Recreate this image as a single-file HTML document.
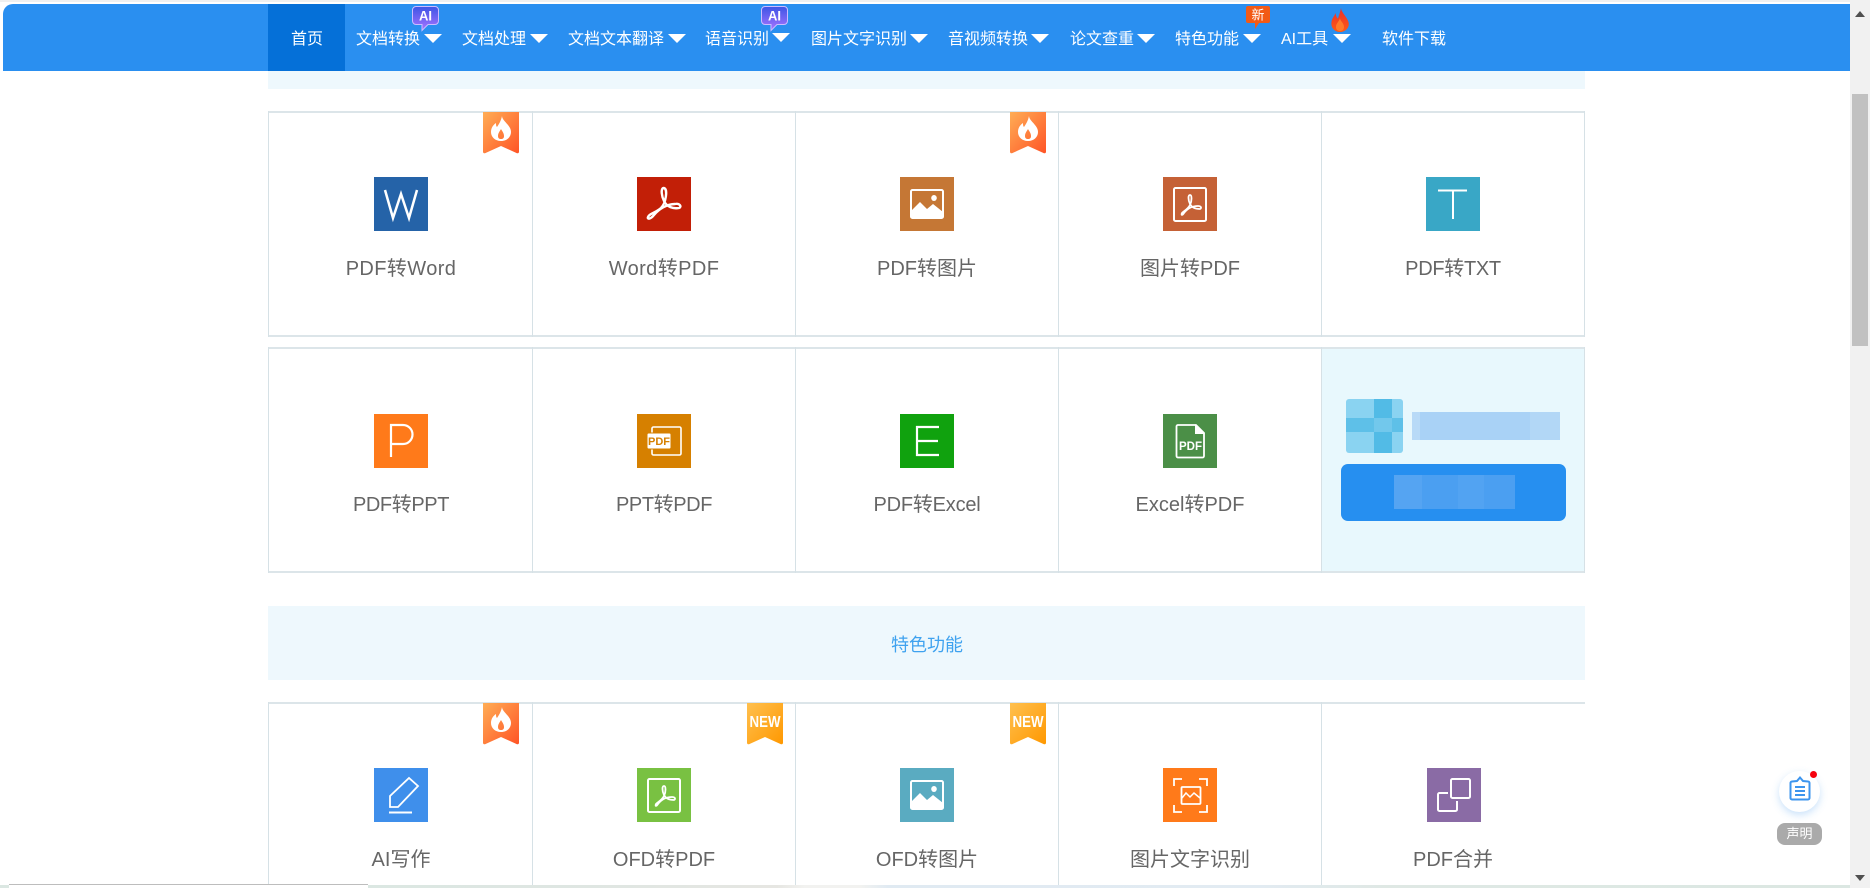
<!DOCTYPE html>
<html lang="zh-CN">
<head>
<meta charset="utf-8">
<title>PDF转换</title>
<style>
html,body{margin:0;padding:0;width:1870px;height:888px;overflow:hidden;background:#fff}
body{position:relative;font-family:"Liberation Sans","Noto Sans CJK SC",sans-serif}
div,span,svg{position:absolute;display:block}
.hd{left:3px;top:4px;width:1847px;height:67px;background:#2a8ff0;border-top-left-radius:10px}
.n{top:28px;height:24px;line-height:24px;font-size:16px;color:#fff;white-space:nowrap}
.a{width:0;height:0;border-left:9px solid transparent;border-right:9px solid transparent;border-top:9px solid #fff;top:34px}
.band{left:268px;width:1317px;background:#eef8fd}
.h{background:#dce5e9}
.v{background:#d6e1e6;width:1px}
.ic{width:54px;height:54px}
.t{width:260px;height:30px;line-height:30px;font-size:20px;color:#666;text-align:center;white-space:nowrap}
.r{width:36px;height:42px}
</style>
</head>
<body>
<svg width="0" height="0" style="left:0;top:0">
<defs>
<linearGradient id="gf" x1="0" y1="0" x2="1" y2="1"><stop offset="0" stop-color="#ffad55"/><stop offset="1" stop-color="#ff5426"/></linearGradient>
<linearGradient id="gn" x1="0" y1="0" x2="1" y2="1"><stop offset="0" stop-color="#ffc04f"/><stop offset="1" stop-color="#ff9800"/></linearGradient>
<linearGradient id="gai" x1="0" y1="0" x2="0" y2="1"><stop offset="0" stop-color="#3d55e6"/><stop offset="1" stop-color="#a874ff"/></linearGradient>
<linearGradient id="gfl" x1="0" y1="0" x2="0" y2="1"><stop offset="0" stop-color="#e8302e"/><stop offset="1" stop-color="#ff5a14"/></linearGradient>
<symbol id="flame" viewBox="0 0 36 42"><path fill="#fff" fill-rule="evenodd" d="M19 4c0 5 9 9 9 16 0 5-4 9-10 9S8 25 8 20c0-4 2-7 5-9 0 2 0 3 1 4 2-3 4-6 5-11zM18 17c-1 2-3 4-3 7 0 2 1 3 3 3s3-1 3-3c0-3-2-5-3-7z"/></symbol>
</defs>
</svg>

<!-- top strip -->
<div style="left:0;top:0;width:1850px;height:2px;background:#f0f0f0"></div>

<!-- header -->
<div class="hd"></div>
<div style="left:268px;top:4px;width:77px;height:67px;background:#0570d8"></div>
<div class="n" style="left:291px">首页</div>
<div class="n" style="left:356px">文档转换</div><div class="a" style="left:424px"></div>
<div class="n" style="left:462px">文档处理</div><div class="a" style="left:530px"></div>
<div class="n" style="left:568px">文档文本翻译</div><div class="a" style="left:668px"></div>
<div class="n" style="left:705px">语音识别</div><div class="a" style="left:772px;top:33px"></div>
<div class="n" style="left:811px">图片文字识别</div><div class="a" style="left:910px"></div>
<div class="n" style="left:948px">音视频转换</div><div class="a" style="left:1031px"></div>
<div class="n" style="left:1070px">论文查重</div><div class="a" style="left:1137px"></div>
<div class="n" style="left:1175px">特色功能</div><div class="a" style="left:1243px"></div>
<div class="n" style="left:1281px">AI工具</div><div class="a" style="left:1333px"></div>
<div class="n" style="left:1382px">软件下载</div>

<!-- AI badges -->
<svg style="left:411px;top:5px" width="29" height="27" viewBox="0 0 29 27"><path d="M5 1.500H24a3.500 3.500 0 0 1 3.500 3.500V16a3.500 3.500 0 0 1-3.500 3.500H17L11 25.500V19.500H5A3.500 3.500 0 0 1 1.500 16V5A3.500 3.500 0 0 1 5 1.500z" fill="url(#gai)" stroke="#cdbbff" stroke-width="1"/><text x="14.500" y="15.500" font-family="Liberation Sans" font-size="13.500" font-weight="bold" fill="#fff" text-anchor="middle" textLength="13" lengthAdjust="spacingAndGlyphs">AI</text></svg>
<svg style="left:760px;top:5px" width="29" height="27" viewBox="0 0 29 27"><path d="M5 1.500H24a3.500 3.500 0 0 1 3.500 3.500V16a3.500 3.500 0 0 1-3.500 3.500H17L11 25.500V19.500H5A3.500 3.500 0 0 1 1.500 16V5A3.500 3.500 0 0 1 5 1.500z" fill="url(#gai)" stroke="#cdbbff" stroke-width="1"/><text x="14.500" y="15.500" font-family="Liberation Sans" font-size="13.500" font-weight="bold" fill="#fff" text-anchor="middle" textLength="13" lengthAdjust="spacingAndGlyphs">AI</text></svg>
<!-- 新 badge -->
<svg style="left:1246px;top:6px" width="24" height="23" viewBox="0 0 24 23"><path d="M2 0H22a2 2 0 0 1 2 2V15a2 2 0 0 1-2 2H13L9 23V17H2a2 2 0 0 1-2-2V2a2 2 0 0 1 2-2z" fill="#f25a16"/><text x="12" y="13.500" font-family="Noto Sans CJK SC" font-size="13" fill="#fff" text-anchor="middle">新</text></svg>
<!-- fire -->
<svg style="left:1330px;top:8px" width="20" height="24" viewBox="0 0 20 24"><path d="M11 0C11 4 17 9 18.500 14C20 20 15 24 10 24C5 24 0.500 20 1.500 14C2 10 4 9 5.500 5C6 8 7 10 8 10.500C9 7 10.500 3 11 0z" fill="url(#gfl)"/><path d="M10 10C10 13 14 15 14 19C14 22 12 23 10 23C8 23 6 22 6 19C6 15 9 14 10 10z" fill="#ff7a2a"/></svg>

<!-- first band remainder -->
<div class="band" style="top:71px;height:18px"></div>

<!-- Row 1 lines -->
<div class="h" style="left:268px;top:111px;width:1317px;height:2px"></div>
<div class="h" style="left:268px;top:335px;width:1317px;height:2px"></div>
<div class="v" style="left:268px;top:111px;height:226px"></div>
<div class="v" style="left:532px;top:111px;height:226px"></div>
<div class="v" style="left:795px;top:111px;height:226px"></div>
<div class="v" style="left:1058px;top:111px;height:226px"></div>
<div class="v" style="left:1321px;top:111px;height:226px"></div>
<div class="v" style="left:1584px;top:111px;height:226px"></div>

<!-- Row 2 promo bg -->
<div style="left:1321px;top:347px;width:263px;height:224px;background:#e8f8fd"></div>
<!-- Row 2 lines -->
<div class="h" style="left:268px;top:347px;width:1317px;height:2px"></div>
<div class="h" style="left:268px;top:571px;width:1317px;height:2px"></div>
<div class="v" style="left:268px;top:347px;height:226px"></div>
<div class="v" style="left:532px;top:347px;height:226px"></div>
<div class="v" style="left:795px;top:347px;height:226px"></div>
<div class="v" style="left:1058px;top:347px;height:226px"></div>
<div class="v" style="left:1321px;top:347px;height:226px"></div>
<div class="v" style="left:1584px;top:347px;height:226px"></div>

<!-- feature band -->
<div class="band" style="top:606px;height:74px"></div>
<div style="left:867px;top:630px;width:120px;height:30px;line-height:30px;text-align:center;font-size:18px;color:#3fa2ef">特色功能</div>

<!-- Row 3 lines -->
<div class="h" style="left:268px;top:702px;width:1317px;height:2px"></div>
<div class="v" style="left:268px;top:702px;height:183px"></div>
<div class="v" style="left:532px;top:702px;height:183px"></div>
<div class="v" style="left:795px;top:702px;height:183px"></div>
<div class="v" style="left:1058px;top:702px;height:183px"></div>
<div class="v" style="left:1321px;top:702px;height:183px"></div>

<!-- Ribbons -->
<svg class="r" style="left:483px;top:112px" viewBox="0 0 36 42"><path d="M0 0H36V40a1.500 1.500 0 0 1-2 1.200L18 34 2 41.200A1.500 1.500 0 0 1 0 40z" fill="url(#gf)"/><use href="#flame" width="36" height="42"/></svg>
<svg class="r" style="left:1010px;top:112px" viewBox="0 0 36 42"><path d="M0 0H36V40a1.500 1.500 0 0 1-2 1.200L18 34 2 41.200A1.500 1.500 0 0 1 0 40z" fill="url(#gf)"/><use href="#flame" width="36" height="42"/></svg>
<svg class="r" style="left:483px;top:703px" viewBox="0 0 36 42"><path d="M0 0H36V40a1.500 1.500 0 0 1-2 1.200L18 34 2 41.200A1.500 1.500 0 0 1 0 40z" fill="url(#gf)"/><use href="#flame" width="36" height="42"/></svg>
<svg class="r" style="left:747px;top:703px" viewBox="0 0 36 42"><path d="M0 0H36V40a1.500 1.500 0 0 1-2 1.200L18 34 2 41.200A1.500 1.500 0 0 1 0 40z" fill="url(#gn)"/><text x="18" y="24" font-family="Liberation Sans" font-size="15.500" font-weight="bold" fill="#fff" text-anchor="middle" textLength="31" lengthAdjust="spacingAndGlyphs">NEW</text></svg>
<svg class="r" style="left:1010px;top:703px" viewBox="0 0 36 42"><path d="M0 0H36V40a1.500 1.500 0 0 1-2 1.200L18 34 2 41.200A1.500 1.500 0 0 1 0 40z" fill="url(#gn)"/><text x="18" y="24" font-family="Liberation Sans" font-size="15.500" font-weight="bold" fill="#fff" text-anchor="middle" textLength="31" lengthAdjust="spacingAndGlyphs">NEW</text></svg>

<!-- Row 1 icons -->
<svg class="ic" style="left:374px;top:177px" viewBox="0 0 54 54"><rect width="54" height="54" fill="#2563a8"/><path d="M11 13L19 41 27 17 35 41 43 13" fill="none" stroke="#fff" stroke-width="2.500"/></svg>
<svg class="ic" style="left:637px;top:177px" viewBox="0 0 54 54"><rect width="54" height="54" fill="#c21f07"/><path d="M27 11C23 11 25 20 27 24C30 30 36 32 42 31C45 30 43 26 38 27C30 27 22 32 17 38C13 43 10 42 11 40C12 37 18 36 24 31C29 26 31 12 27 11Z" fill="none" stroke="#fff" stroke-width="2.400"/></svg>
<svg class="ic" style="left:900px;top:177px" viewBox="0 0 54 54"><rect width="54" height="54" fill="#c57735"/><rect x="11" y="13" width="32" height="28" rx="1.500" fill="none" stroke="#fff" stroke-width="2"/><path d="M11 34L20 25 27 32 33 27 43 35V41H11z" fill="#fff"/><ellipse cx="34" cy="21" rx="2.800" ry="3" fill="#fff"/></svg>
<svg class="ic" style="left:1163px;top:177px" viewBox="0 0 54 54"><rect width="54" height="54" fill="#c56136"/><rect x="11" y="11" width="32" height="33" rx="1.500" fill="none" stroke="#fff" stroke-width="2"/><path d="M27 18C25 18 25 23 27 27C29 31 33 32 37 32C39 31 38 29 35 29C29 29 24 32 21 36C19 39 18 38 19 36C21 34 25 32 27 28C29 24 29 18 27 18Z" fill="none" stroke="#fff" stroke-width="1.800"/></svg>
<svg class="ic" style="left:1426px;top:177px" viewBox="0 0 54 54"><rect width="54" height="54" fill="#39a7c6"/><path d="M12 13.500H41M27 13.500V42" fill="none" stroke="#fff" stroke-width="2"/></svg>

<!-- Row 2 icons -->
<svg class="ic" style="left:374px;top:414px" viewBox="0 0 54 54"><rect width="54" height="54" fill="#ff7a1a"/><path d="M17 43V11H29A9.500 9.500 0 0 1 29 30H17" fill="none" stroke="#fff" stroke-width="2.200"/></svg>
<svg class="ic" style="left:637px;top:414px" viewBox="0 0 54 54"><rect width="54" height="54" fill="#d68000"/><rect x="15" y="13" width="29" height="28" rx="1.500" fill="none" stroke="#fff" stroke-width="1.600"/><rect x="10" y="19" width="24" height="16" rx="1.500" fill="#fff" stroke="#d68000" stroke-width="1"/><text x="22" y="31" font-family="Liberation Sans" font-size="11" font-weight="bold" fill="#d68000" text-anchor="middle">PDF</text></svg>
<svg class="ic" style="left:900px;top:414px" viewBox="0 0 54 54"><rect width="54" height="54" fill="#10a20e"/><path d="M39 13H17V41H39M17 27H38" fill="none" stroke="#fff" stroke-width="2.200"/></svg>
<svg class="ic" style="left:1163px;top:414px" viewBox="0 0 54 54"><rect width="54" height="54" fill="#4b8f47"/><path d="M15 11H33L41 19V42a1.500 1.500 0 0 1-1.500 1.500H15A1.500 1.500 0 0 1 13.500 42V12.500A1.500 1.500 0 0 1 15 11z" fill="none" stroke="#fff" stroke-width="1.800"/><path d="M32 10L42 20H32z" fill="#fff"/><text x="27.500" y="36" font-family="Liberation Sans" font-size="11.500" font-weight="bold" fill="#fff" text-anchor="middle">PDF</text></svg>

<!-- Row 3 icons -->
<svg class="ic" style="left:374px;top:768px" viewBox="0 0 54 54"><rect width="54" height="54" fill="#3f8feb"/><path d="M16 39V28L35 10 44 18 24 39z" fill="none" stroke="#fff" stroke-width="1.800"/><path d="M15 44.500H38" stroke="#fff" stroke-width="2"/></svg>
<svg class="ic" style="left:637px;top:768px" viewBox="0 0 54 54"><rect width="54" height="54" fill="#79c142"/><rect x="11" y="11" width="32" height="33" rx="1.500" fill="none" stroke="#fff" stroke-width="2"/><path d="M27 18C25 18 25 23 27 27C29 31 33 32 37 32C39 31 38 29 35 29C29 29 24 32 21 36C19 39 18 38 19 36C21 34 25 32 27 28C29 24 29 18 27 18Z" fill="none" stroke="#fff" stroke-width="1.800"/></svg>
<svg class="ic" style="left:900px;top:768px" viewBox="0 0 54 54"><rect width="54" height="54" fill="#5aabc1"/><rect x="11" y="13" width="32" height="28" rx="1.500" fill="none" stroke="#fff" stroke-width="2"/><path d="M11 34L20 25 27 32 33 27 43 35V41H11z" fill="#fff"/><ellipse cx="34" cy="21" rx="2.800" ry="3" fill="#fff"/></svg>
<svg class="ic" style="left:1163px;top:768px" viewBox="0 0 54 54"><rect width="54" height="54" fill="#ff7a1a"/><path d="M11 18V11H19M36 11H44V18M11 37V44H19M36 44H44V37" fill="none" stroke="#fff" stroke-width="1.800"/><rect x="18.500" y="19" width="19" height="17" rx="1" fill="none" stroke="#fff" stroke-width="1.800"/><path d="M19 30L23 25 27 29 31 25 37 30" fill="none" stroke="#fff" stroke-width="1.500"/></svg>
<svg class="ic" style="left:1427px;top:768px" viewBox="0 0 54 54"><rect width="54" height="54" fill="#8a6ba5"/><rect x="24" y="11" width="19" height="19" rx="1.500" fill="none" stroke="#fff" stroke-width="2"/><path d="M21 25H12.500A1.500 1.500 0 0 0 11 26.500V41.500A1.500 1.500 0 0 0 12.500 43H28.500A1.500 1.500 0 0 0 30 41.500V33" fill="none" stroke="#fff" stroke-width="2"/></svg>

<!-- Labels -->
<div class="t" style="left:271px;top:254px;letter-spacing:.4px">PDF转Word</div>
<div class="t" style="left:534px;top:254px;letter-spacing:.4px">Word转PDF</div>
<div class="t" style="left:797px;top:254px">PDF转图片</div>
<div class="t" style="left:1060px;top:254px">图片转PDF</div>
<div class="t" style="left:1323px;top:254px;letter-spacing:-.3px">PDF转TXT</div>
<div class="t" style="left:271px;top:490px;letter-spacing:-.4px">PDF转PPT</div>
<div class="t" style="left:534px;top:490px;letter-spacing:-.4px">PPT转PDF</div>
<div class="t" style="left:797px;top:490px;letter-spacing:-.2px">PDF转Excel</div>
<div class="t" style="left:1060px;top:490px">Excel转PDF</div>
<div class="t" style="left:271px;top:845px">AI写作</div>
<div class="t" style="left:534px;top:845px">OFD转PDF</div>
<div class="t" style="left:797px;top:845px">OFD转图片</div>
<div class="t" style="left:1060px;top:845px">图片文字识别</div>
<div class="t" style="left:1323px;top:845px">PDF合并</div>

<!-- blurred promo -->
<svg style="left:1346px;top:399px" width="57" height="54" viewBox="0 0 57 54"><defs><clipPath id="c"><rect width="57" height="54" rx="3"/></clipPath></defs><g clip-path="url(#c)"><rect width="57" height="54" fill="#8ad3f1"/><rect x="28" width="18" height="54" fill="#52bbe6"/><rect y="19" width="57" height="14" fill="#5ec0e8"/><rect x="28" y="19" width="18" height="14" fill="#72c8ec"/></g></svg>
<div style="left:1412px;top:412px;width:148px;height:28px;background:#a9d2f6"></div>
<div style="left:1412px;top:412px;width:8px;height:28px;background:#b8daf7"></div>
<div style="left:1530px;top:412px;width:30px;height:28px;background:#b2d7f6"></div>
<div style="left:1341px;top:464px;width:225px;height:57px;border-radius:7px;background:#268ff0"></div>
<div style="left:1394px;top:475px;width:121px;height:34px;background:#4b9ff1"></div>
<div style="left:1394px;top:475px;width:28px;height:34px;background:#55a4f2"></div>
<div style="left:1458px;top:475px;width:26px;height:34px;background:#52a3f2"></div>

<!-- floating -->
<div style="left:1779px;top:771px;width:41px;height:41px;border-radius:50%;background:#fff;box-shadow:0 3px 8px rgba(80,160,240,.3)"></div>
<svg style="left:1788px;top:775px" width="24" height="26" viewBox="0 0 24 26"><path d="M4 6.500L9 6 12 2.500 15 6 20 6.500A1.500 1.500 0 0 1 21.500 8V23A1.500 1.500 0 0 1 20 24.500H4A1.500 1.500 0 0 1 2.500 23V8A1.500 1.500 0 0 1 4 6.500z" fill="none" stroke="#3d95ee" stroke-width="2"/><path d="M7 12H17M7 16H17M7 20H17" stroke="#3d95ee" stroke-width="2"/></svg>
<div style="left:1810px;top:771px;width:7px;height:7px;border-radius:50%;background:#f5020f"></div>
<div style="left:1777px;top:823px;width:45px;height:22px;line-height:22px;border-radius:8px;background:#aaa;color:#fff;font-size:13px;text-align:center">声明</div>

<!-- v scrollbar -->
<div style="left:1850px;top:0;width:20px;height:888px;background:#f1f1f1"></div>
<div style="left:1852px;top:94px;width:16px;height:252px;background:#c1c1c1"></div>
<div style="left:1855px;top:11px;width:0;height:0;border-left:5px solid transparent;border-right:5px solid transparent;border-bottom:6px solid #505050"></div>
<div style="left:1855px;top:875px;width:0;height:0;border-left:5px solid transparent;border-right:5px solid transparent;border-top:6px solid #505050"></div>

<!-- bottom strip -->
<div style="left:0;top:885px;width:1850px;height:3px;background:linear-gradient(90deg,#dbe7e2 0,#dbe7e2 20%,#dfe6e2 32%,#e6e6e2 42%,#f2f2f0 43.500%,#f2f2f0 46.500%,#e0eaf2 48%,#e2ebf2 68%,#dfe8e4 75%,#dbe7e2 100%)"></div>
<div style="left:9px;top:885px;width:359px;height:3px;background:#fff;box-shadow:0 -1px 0 #bdbdbd"></div>
</body>
</html>
